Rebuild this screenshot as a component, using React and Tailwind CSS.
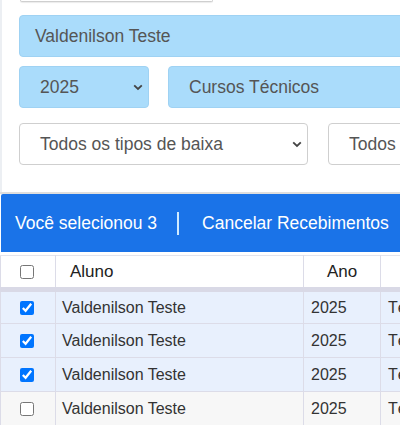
import React from "react";

const rows = [
  { checked: true, aluno: "Valdenilson Teste", ano: "2025", curso: "Técnico" },
  { checked: true, aluno: "Valdenilson Teste", ano: "2025", curso: "Técnico" },
  { checked: true, aluno: "Valdenilson Teste", ano: "2025", curso: "Técnico" },
  { checked: false, aluno: "Valdenilson Teste", ano: "2025", curso: "Técnico" },
];

function Chevron() {
  return (
    <svg width="10" height="7" viewBox="0 0 10 7" className="shrink-0">
      <path d="M1.2 1.3 L5 5 L8.8 1.3" fill="none" stroke="#444" strokeWidth="1.8" />
    </svg>
  );
}

function FakeSelect({ label, className, showChevron = true }) {
  return (
    <div
      className={
        "h-[42px] rounded-[4px] border flex items-center justify-between pl-[20px] pr-[5px] text-[17.5px] text-[#555] " +
        className
      }
    >
      <span>{label}</span>
      {showChevron && <Chevron />}
    </div>
  );
}

export default function App() {
  return (
    <div className="w-[400px] h-[425px] overflow-hidden bg-white font-['Liberation_Sans',Arial,sans-serif]">
      {/* filtros */}
      <div className="w-[600px] border-l-2 border-[#eceff3] pl-[17px] pb-[27px]">
        <div className="ml-[1px] h-[2px] w-[193px] border border-t-0 border-[#cfcfcf] rounded-b-[3px] shadow-[0_1px_1px_rgba(0,0,0,0.08)]" />
        <div className="mt-[13px] h-[42px] w-[520px] rounded-[4px] border border-[#9fd2f3] bg-[#aadcfb] flex items-center pl-[15px] text-[17.5px] text-[#555]">
          Valdenilson Teste
        </div>
        <div className="mt-[9px] flex gap-[19px]">
          <FakeSelect label="2025" className="w-[130px] bg-[#aadcfb] border-[#9fd2f3]" />
          <FakeSelect label="Cursos Técnicos" className="w-[360px] bg-[#aadcfb] border-[#9fd2f3]" showChevron={false} />
        </div>
        <div className="mt-[15px] flex gap-[20px]">
          <FakeSelect label="Todos os tipos de baixa" className="w-[289px] bg-white border-[#cfcfcf]" />
          <FakeSelect label="Todos" className="w-[200px] bg-white border-[#cfcfcf]" showChevron={false} />
        </div>
      </div>

      {/* barra de selecao */}
      <div className="border-t-2 border-[#dedede]">
        <div className="ml-[1px] h-[58px] bg-[#1a73e8] rounded-tl-[2px] flex items-center pl-[14px] text-[17.5px] text-white whitespace-nowrap">
          <span>Você selecionou 3</span>
          <span className="ml-[20px] mr-[23px] w-[2px] h-[23px] bg-[#cfeaff]" />
          <span>Cancelar Recebimentos</span>
        </div>
      </div>

      {/* tabela */}
      <table className="mt-[3px] w-[560px] table-fixed border-collapse border-l border-[#dcdce8] text-[#333]">
        <colgroup>
          <col className="w-[55px]" />
          <col className="w-[248px]" />
          <col className="w-[77px]" />
          <col />
        </colgroup>
        <thead>
          <tr className="h-[34px] bg-white border-t border-[#e4e4ec] border-b-[5px] border-b-[#d9d9e6] text-[17px] text-[#222]">
            <th className="border-r border-[#dcdce8] font-normal">
              <div className="flex justify-center pr-[2px]">
                <input type="checkbox" className="w-[14px] h-[14px]" readOnly />
              </div>
            </th>
            <th className="border-r border-[#dcdce8] font-normal text-left pl-[14px]">Aluno</th>
            <th className="border-r border-[#dcdce8] font-normal text-center">Ano</th>
            <th className="font-normal text-center">Curso</th>
          </tr>
        </thead>
        <tbody className="text-[16px]">
          {rows.map((r, i) => (
            <tr
              key={i}
              className={
                "h-[34px] border-b border-[#dcdce8] " + (r.checked ? "bg-[#e8f0fd]" : "bg-[#f7f7f7]")
              }
            >
              <td className="border-r border-[#dcdce8]">
                <div className="flex justify-center pr-[2px]">
                  <input type="checkbox" className="w-[14px] h-[14px]" checked={r.checked} readOnly />
                </div>
              </td>
              <td className="border-r border-[#dcdce8] pl-[6px] whitespace-nowrap">{r.aluno}</td>
              <td className="border-r border-[#dcdce8] pl-[7px]">{r.ano}</td>
              <td className="pl-[7px] whitespace-nowrap">{r.curso}</td>
            </tr>
          ))}
        </tbody>
      </table>
    </div>
  );
}
